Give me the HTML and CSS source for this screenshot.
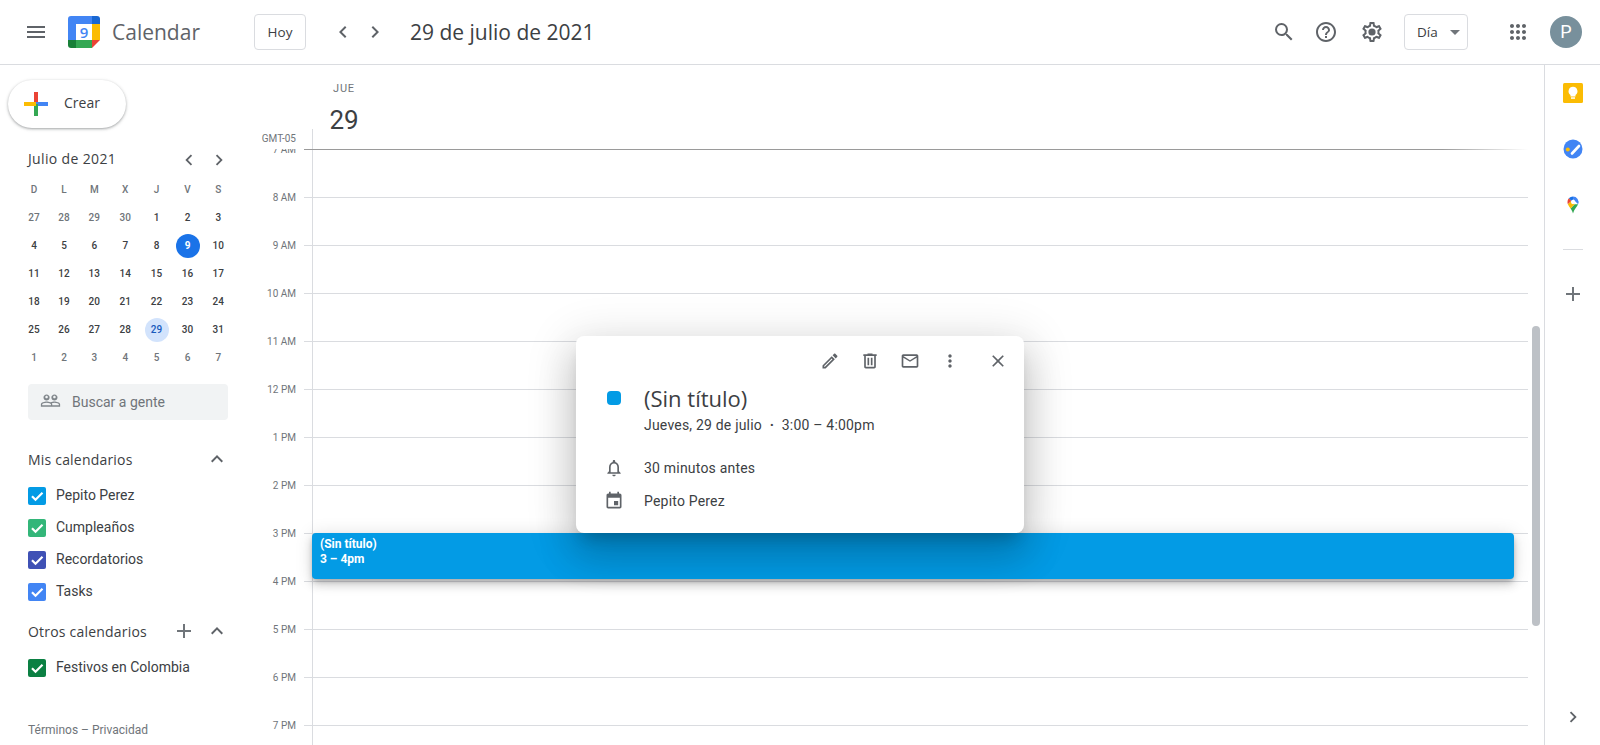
FILE: index.html
```html
<!DOCTYPE html>
<html lang="es">
<head>
    <meta charset="UTF-8" />
    <meta name="viewport" content="width=device-width, initial-scale=1.0" />
    <title>Google Calendar</title>
    <link rel="stylesheet" href="styles.css">
</head>
<body>
    <svg class="sprite" aria-hidden="true">
        <symbol id="i-menu" viewBox="0 0 24 24"><path d="M3 18h18v-2H3v2zm0-5h18v-2H3v2zm0-7v2h18V6H3z"/></symbol>
        <symbol id="i-left" viewBox="0 0 24 24"><path d="M15.41 16.59L10.83 12l4.58-4.59L14 6l-6 6 6 6 1.41-1.41z"/></symbol>
        <symbol id="i-right" viewBox="0 0 24 24"><path d="M8.59 16.59L13.17 12 8.59 7.41 10 6l6 6-6 6-1.41-1.41z"/></symbol>
        <symbol id="i-up" viewBox="0 0 24 24"><path d="M12 8l-6 6 1.41 1.41L12 10.83l4.59 4.58L18 14z"/></symbol>
        <symbol id="i-add" viewBox="0 0 24 24"><path d="M19 13h-6v6h-2v-6H5v-2h6V5h2v6h6v2z"/></symbol>
        <symbol id="i-search" viewBox="0 0 24 24"><path d="M15.5 14h-.79l-.28-.27A6.471 6.471 0 0 0 16 9.5 6.5 6.5 0 1 0 9.5 16c1.61 0 3.09-.59 4.23-1.57l.27.28v.79l5 4.99L20.49 19l-4.99-5zm-6 0C7.01 14 5 11.99 5 9.5S7.01 5 9.5 5 14 7.01 14 9.5 11.99 14 9.5 14z"/></symbol>
        <symbol id="i-help" viewBox="0 0 24 24"><path d="M11 18h2v-2h-2v2zm1-16C6.48 2 2 6.48 2 12s4.48 10 10 10 10-4.48 10-10S17.52 2 12 2zm0 18c-4.41 0-8-3.59-8-8s3.59-8 8-8 8 3.59 8 8-3.59 8-8 8zm0-14c-2.21 0-4 1.79-4 4h2c0-1.1.9-2 2-2s2 .9 2 2c0 2-3 1.75-3 5h2c0-2.25 3-2.5 3-5 0-2.21-1.79-4-4-4z"/></symbol>
        <symbol id="i-gear" viewBox="0 0 24 24"><path d="M19.43 12.98c.04-.32.07-.64.07-.98 0-.34-.03-.66-.07-.98l2.11-1.65c.19-.15.24-.42.12-.64l-2-3.46c-.09-.16-.26-.25-.44-.25-.06 0-.12.01-.17.03l-2.49 1c-.52-.4-1.08-.73-1.69-.98l-.38-2.65C14.46 2.18 14.25 2 14 2h-4c-.25 0-.46.18-.49.42l-.38 2.65c-.61.25-1.17.59-1.69.98l-2.49-1c-.06-.02-.12-.03-.18-.03-.17 0-.34.09-.43.25l-2 3.46c-.13.22-.07.49.12.64l2.11 1.65c-.04.32-.07.65-.07.98 0 .33.03.66.07.98l-2.11 1.65c-.19.15-.24.42-.12.64l2 3.46c.09.16.26.25.44.25.06 0 .12-.01.17-.03l2.49-1c.52.4 1.08.73 1.69.98l.38 2.65c.03.24.24.42.49.42h4c.25 0 .46-.18.49-.42l.38-2.65c.61-.25 1.17-.59 1.69-.98l2.49 1c.06.02.12.03.18.03.17 0 .34-.09.43-.25l2-3.46c.12-.22.07-.49-.12-.64l-2.11-1.65zm-1.98-1.71c.04.31.05.52.05.73 0 .21-.02.43-.05.73l-.14 1.13.89.7 1.08.84-.7 1.21-1.27-.51-1.04-.42-.9.68c-.43.32-.84.56-1.25.73l-1.06.43-.16 1.13-.2 1.35h-1.4l-.19-1.35-.16-1.13-1.06-.43c-.43-.18-.83-.41-1.23-.71l-.91-.7-1.06.43-1.27.51-.7-1.21 1.08-.84.89-.7-.14-1.13c-.03-.31-.05-.54-.05-.74s.02-.43.05-.73l.14-1.13-.89-.7-1.08-.84.7-1.21 1.27.51 1.04.42.9-.68c.43-.32.84-.56 1.25-.73l1.06-.43.16-1.13.2-1.35h1.39l.19 1.35.16 1.13 1.06.43c.43.18.83.41 1.23.71l.91.7 1.06-.43 1.27-.51.7 1.21-1.07.85-.89.7.14 1.13z"/><circle cx="12" cy="12" r="3.6"/></symbol>
        <symbol id="i-apps" viewBox="0 0 24 24"><path d="M6 8c1.1 0 2-.9 2-2s-.9-2-2-2-2 .9-2 2 .9 2 2 2zm6 12c1.1 0 2-.9 2-2s-.9-2-2-2-2 .9-2 2 .9 2 2 2zm-6 0c1.1 0 2-.9 2-2s-.9-2-2-2-2 .9-2 2 .9 2 2 2zm0-6c1.1 0 2-.9 2-2s-.9-2-2-2-2 .9-2 2 .9 2 2 2zm6 0c1.1 0 2-.9 2-2s-.9-2-2-2-2 .9-2 2 .9 2 2 2zm4-8c0 1.1.9 2 2 2s2-.9 2-2-.9-2-2-2-2 .9-2 2zm-4 2c1.1 0 2-.9 2-2s-.9-2-2-2-2 .9-2 2 .9 2 2 2zm6 6c1.1 0 2-.9 2-2s-.9-2-2-2-2 .9-2 2 .9 2 2 2zm0 6c1.1 0 2-.9 2-2s-.9-2-2-2-2 .9-2 2 .9 2 2 2z"/></symbol>
        <symbol id="i-people" viewBox="0 0 24 24"><path d="M16.5 13c-1.2 0-3.07.34-4.5 1-1.43-.67-3.3-1-4.5-1C5.33 13 1 14.08 1 16.25V19h22v-2.75c0-2.17-4.33-3.25-6.5-3.25zm-4 4.5h-10v-1.25c0-.54 2.56-1.75 5-1.75s5 1.21 5 1.75v1.25zm9 0H14v-1.25c0-.46-.2-.86-.52-1.22.88-.3 1.96-.53 3.02-.53 2.44 0 5 1.21 5 1.75v1.25zM7.5 12c1.93 0 3.5-1.57 3.5-3.5S9.43 5 7.5 5 4 6.57 4 8.5 5.57 12 7.5 12zm0-5.5c.83 0 1.5.67 1.5 1.5s-.67 1.5-1.5 1.5S6 8.83 6 8s.67-1.5 1.5-1.5zm9 5.5c1.93 0 3.5-1.57 3.5-3.5S18.43 5 16.5 5 13 6.57 13 8.5s1.57 3.5 3.5 3.5zm0-5.5c.83 0 1.5.67 1.5 1.5s-.67 1.5-1.5 1.5S15 8.83 15 8s.67-1.5 1.5-1.5z"/></symbol>
        <symbol id="i-edit" viewBox="0 0 24 24"><path d="M3 17.25V21h3.75L17.81 9.94l-3.75-3.75L3 17.25zM5.92 19H5v-.92l9.06-9.06.92.92L5.92 19zM20.71 5.63l-2.34-2.34c-.2-.2-.45-.29-.71-.29s-.51.1-.7.29l-1.83 1.83 3.75 3.75 1.83-1.83c.39-.39.39-1.02 0-1.41z"/></symbol>
        <symbol id="i-delete" viewBox="0 0 24 24"><path d="M15 4V3H9v1H4v2h1v13c0 1.1.9 2 2 2h10c1.1 0 2-.9 2-2V6h1V4h-5zm2 15H7V6h10v13z"/><path d="M9 8h2v9H9zm4 0h2v9h-2z"/></symbol>
        <symbol id="i-mail" viewBox="0 0 24 24"><path d="M20 4H4c-1.1 0-1.99.9-1.99 2L2 18c0 1.1.9 2 2 2h16c1.1 0 2-.9 2-2V6c0-1.1-.9-2-2-2zm0 14H4V8l8 5 8-5v10zm-8-7L4 6h16l-8 5z"/></symbol>
        <symbol id="i-more" viewBox="0 0 24 24"><path d="M12 8c1.1 0 2-.9 2-2s-.9-2-2-2-2 .9-2 2 .9 2 2 2zm0 2c-1.1 0-2 .9-2 2s.9 2 2 2 2-.9 2-2-.9-2-2-2zm0 6c-1.1 0-2 .9-2 2s.9 2 2 2 2-.9 2-2-.9-2-2-2z"/></symbol>
        <symbol id="i-close" viewBox="0 0 24 24"><path d="M19 6.41L17.59 5 12 10.59 6.41 5 5 6.41 10.59 12 5 17.59 6.41 19 12 13.41 17.59 19 19 17.59 13.41 12z"/></symbol>
        <symbol id="i-bell" viewBox="0 0 24 24"><path d="M12 22c1.1 0 2-.9 2-2h-4c0 1.1.9 2 2 2zm6-6v-5c0-3.07-1.63-5.64-4.5-6.32V4c0-.83-.67-1.5-1.5-1.5s-1.5.67-1.5 1.5v.68C7.64 5.36 6 7.92 6 11v5l-2 2v1h16v-1l-2-2zm-2 1H8v-6c0-2.48 1.51-4.5 4-4.5s4 2.02 4 4.5v6z"/></symbol>
        <symbol id="i-event" viewBox="0 0 24 24"><path d="M17 12h-5v5h5v-5zM16 1v2H8V1H6v2H5c-1.11 0-1.99.9-1.99 2L3 19c0 1.1.89 2 2 2h14c1.1 0 2-.9 2-2V5c0-1.1-.9-2-2-2h-1V1h-2zm3 18H5V8h14v11z"/></symbol>
        <symbol id="i-check" viewBox="0 0 18 18"><path d="M4 9.300l3.500 3.500 7-7" fill="none" stroke="#fff" stroke-width="2.200"/></symbol>
    </svg>

    <div class="app">
        <header class="topbar">
            <div class="brand">
                <svg class="icon menu-icon"><use href="#i-menu"/></svg>
                <svg class="logo" viewBox="0 0 32 32">
                    <path d="M24 0H3a3 3 0 0 0-3 3v21h8V8h16z" fill="#4285f4"/>
                    <path d="M24 0h5a3 3 0 0 1 3 3v5h-8z" fill="#1967d2"/>
                    <rect x="24" y="8" width="8" height="16" fill="#fbbc04"/>
                    <rect x="8" y="24" width="16" height="8" fill="#34a853"/>
                    <path d="M0 24h8v8H3a3 3 0 0 1-3-3z" fill="#188038"/>
                    <path d="M24 24h8l-8 8z" fill="#ea4335"/>
                    <text class="logo-day" x="16" y="21.500" text-anchor="middle">9</text>
                </svg>
                <span class="brand-name">Calendar</span>
            </div>
            <button class="outline-btn today-btn">Hoy</button>
            <div class="nav-arrows">
                <svg class="icon"><use href="#i-left"/></svg>
                <svg class="icon"><use href="#i-right"/></svg>
            </div>
            <h1 class="date-title">29 de julio de 2021</h1>
            <div class="tools">
                <svg class="icon"><use href="#i-search"/></svg>
                <svg class="icon help-icon"><use href="#i-help"/></svg>
                <svg class="icon gear-icon"><use href="#i-gear"/></svg>
                <button class="outline-btn view-btn">Día<span class="caret"></span></button>
                <svg class="icon apps-icon"><use href="#i-apps"/></svg>
                <div class="avatar">P</div>
            </div>
        </header>

        <div class="main">
            <aside class="sidebar">
                <button class="create-btn">
                    <svg class="create-plus" viewBox="0 0 24 24">
                        <rect x="10" y="0" width="4" height="12" fill="#ea4335"/>
                        <rect x="12" y="10" width="12" height="4" fill="#4285f4"/>
                        <rect x="10" y="12" width="4" height="12" fill="#34a853"/>
                        <rect x="0" y="10" width="12" height="4" fill="#fbbc04"/>
                    </svg>
                    Crear
                </button>

                <div class="mini-head">
                    <span class="mini-title">Julio de 2021</span>
                    <svg class="icon small"><use href="#i-left"/></svg>
                    <svg class="icon small"><use href="#i-right"/></svg>
                </div>
                <div class="mini-grid">
                    <span class="wd">D</span><span class="wd">L</span><span class="wd">M</span><span class="wd">X</span><span class="wd">J</span><span class="wd">V</span><span class="wd">S</span>
                    <span class="other">27</span><span class="other">28</span><span class="other">29</span><span class="other">30</span><span>1</span><span>2</span><span>3</span>
                    <span>4</span><span>5</span><span>6</span><span>7</span><span>8</span><span><b class="today">9</b></span><span>10</span>
                    <span>11</span><span>12</span><span>13</span><span>14</span><span>15</span><span>16</span><span>17</span>
                    <span>18</span><span>19</span><span>20</span><span>21</span><span>22</span><span>23</span><span>24</span>
                    <span>25</span><span>26</span><span>27</span><span>28</span><span><b class="picked">29</b></span><span>30</span><span>31</span>
                    <span class="other">1</span><span class="other">2</span><span class="other">3</span><span class="other">4</span><span class="other">5</span><span class="other">6</span><span class="other">7</span>
                </div>

                <div class="people-search">
                    <svg class="icon people-icon"><use href="#i-people"/></svg>
                    Buscar a gente
                </div>

                <div class="cal-head first">
                    <span class="cal-title">Mis calendarios</span>
                    <svg class="icon"><use href="#i-up"/></svg>
                </div>
                <ul class="cal-list">
                    <li><span class="check c-blue"><svg><use href="#i-check"/></svg></span>Pepito Perez</li>
                    <li><span class="check c-green"><svg><use href="#i-check"/></svg></span>Cumpleaños</li>
                    <li><span class="check c-indigo"><svg><use href="#i-check"/></svg></span>Recordatorios</li>
                    <li><span class="check c-tasks"><svg><use href="#i-check"/></svg></span>Tasks</li>
                </ul>

                <div class="cal-head">
                    <span class="cal-title">Otros calendarios</span>
                    <svg class="icon add-icon"><use href="#i-add"/></svg>
                    <svg class="icon"><use href="#i-up"/></svg>
                </div>
                <ul class="cal-list">
                    <li><span class="check c-forest"><svg><use href="#i-check"/></svg></span>Festivos en Colombia</li>
                </ul>

                <div class="terms">Términos – Privacidad</div>
            </aside>

            <section class="day-view">
                <div class="day-head">
                    <div class="gmt">GMT-05</div>
                    <div class="day-label">
                        <div class="day-name">JUE</div>
                        <div class="day-num">29</div>
                    </div>
                </div>
                <div class="hours">
                    <div class="scroll-edge"></div>
                    <div class="hour"><span class="hour-label">7 AM</span><i class="tick"></i><div class="cell"></div></div>
                    <div class="hour"><span class="hour-label">8 AM</span><i class="tick"></i><div class="cell"></div></div>
                    <div class="hour"><span class="hour-label">9 AM</span><i class="tick"></i><div class="cell"></div></div>
                    <div class="hour"><span class="hour-label">10 AM</span><i class="tick"></i><div class="cell"></div></div>
                    <div class="hour"><span class="hour-label">11 AM</span><i class="tick"></i><div class="cell"></div></div>
                    <div class="hour"><span class="hour-label">12 PM</span><i class="tick"></i><div class="cell"></div></div>
                    <div class="hour"><span class="hour-label">1 PM</span><i class="tick"></i><div class="cell"></div></div>
                    <div class="hour"><span class="hour-label">2 PM</span><i class="tick"></i><div class="cell"></div></div>
                    <div class="hour"><span class="hour-label">3 PM</span><i class="tick"></i><div class="cell"></div></div>
                    <div class="hour"><span class="hour-label">4 PM</span><i class="tick"></i><div class="cell"></div></div>
                    <div class="hour"><span class="hour-label">5 PM</span><i class="tick"></i><div class="cell"></div></div>
                    <div class="hour"><span class="hour-label">6 PM</span><i class="tick"></i><div class="cell"></div></div>
                    <div class="hour"><span class="hour-label">7 PM</span><i class="tick"></i><div class="cell"></div></div>
                    <div class="event">
                        <div>(Sin título)</div>
                        <div>3 – 4pm</div>
                    </div>
                    <div class="scroll-thumb"></div>
                </div>
            </section>

            <aside class="rail">
                <svg class="rail-app" viewBox="0 0 20 20">
                    <rect width="20" height="20" rx="1.500" fill="#fbbc04"/>
                    <path d="M10 3.800a4.500 4.500 0 0 0-2.500 8.200v1.400h5V12A4.500 4.500 0 0 0 10 3.800z" fill="#fff"/>
                    <rect x="8" y="14.300" width="4" height="1.500" fill="#fff"/>
                </svg>
                <svg class="rail-app" viewBox="0 0 20 20">
                    <circle cx="10" cy="10" r="9.500" fill="#4285f4"/>
                    <path d="M9 14.500l7-7.500" fill="none" stroke="#fff" stroke-width="2.600" stroke-linecap="round"/>
                    <circle cx="4.800" cy="10.500" r="2" fill="#fbbc04"/>
                </svg>
                <svg class="rail-app" viewBox="0 0 20 20">
                    <g transform="translate(1.500 1.500) scale(.85)">
                        <path d="M10 0a6.500 6.500 0 0 0-4.900 2.200l3 3L10 3.600z" fill="#1a73e8"/>
                        <path d="M5.100 2.200A6.500 6.500 0 0 0 3.500 6.500c0 1 .2 1.800.5 2.500l4.100-3.800z" fill="#ea4335"/>
                        <path d="M10 0a6.500 6.500 0 0 1 6 9l-4-4a2.600 2.600 0 0 0-2-1.400z" fill="#4285f4"/>
                        <path d="M16 9c-1.300 3-4.600 5.600-6 11-.6-2.400-1.800-4.200-2.900-5.800L12 9z" fill="#34a853"/>
                        <path d="M4 9l4.100-3.800L12 9l-4.900 5.200C5.900 12.500 4.800 11 4 9z" fill="#fbbc04"/>
                        <circle cx="10" cy="6.500" r="2.500" fill="#fff"/>
                    </g>
                </svg>
                <div class="rail-sep"></div>
                <svg class="icon add-icon-rail"><use href="#i-add"/></svg>
                <svg class="icon rail-toggle small"><use href="#i-right"/></svg>
            </aside>
        </div>

        <div class="popup">
            <div class="popup-tools">
                <svg class="icon pop-icon"><use href="#i-edit"/></svg>
                <svg class="icon pop-icon"><use href="#i-delete"/></svg>
                <svg class="icon pop-icon"><use href="#i-mail"/></svg>
                <svg class="icon pop-icon"><use href="#i-more"/></svg>
                <svg class="icon pop-icon pop-close"><use href="#i-close"/></svg>
            </div>
            <div class="popup-title"><span class="dot"></span>(Sin título)</div>
            <div class="popup-when">Jueves, 29 de julio <span class="sep">·</span> 3:00 – 4:00pm</div>
            <div class="popup-row first-row"><svg class="icon pop-icon"><use href="#i-bell"/></svg>30 minutos antes</div>
            <div class="popup-row"><svg class="icon pop-icon"><use href="#i-event"/></svg>Pepito Perez</div>
        </div>
    </div>
</body>
</html>
```

FILE: styles.css
```css
* {
    box-sizing: border-box;
    margin: 0;
    padding: 0;
}

body {
    font-family: "Roboto", sans-serif;
    color: #3c4043;
    background: #fff;
    overflow: hidden;
}

.sprite {
    display: none;
}

.app {
    position: relative;
    height: 100vh;
    display: flex;
    flex-direction: column;
}

.icon {
    width: 24px;
    height: 24px;
    flex: none;
    fill: #5f6368;
}

.icon.small {
    width: 22px;
    height: 22px;
}

/* top bar */

.topbar {
    height: 65px;
    flex: none;
    display: flex;
    align-items: center;
    border-bottom: 1px solid #dadce0;
}

.brand {
    width: 254px;
    padding-left: 24px;
    display: flex;
    align-items: center;
}

.logo {
    width: 32px;
    height: 32px;
    margin-left: 20px;
}

.logo-day {
    font-family: "Open Sans", sans-serif;
    font-size: 15px;
    font-weight: 600;
    fill: #4285f4;
}

.brand-name {
    font-family: "Open Sans", sans-serif;
    font-size: 21px;
    color: #5f6368;
    margin-left: 12px;
}

.outline-btn {
    height: 36px;
    background: #fff;
    border: 1px solid #dadce0;
    border-radius: 4px;
    font-family: "Open Sans", sans-serif;
    font-size: 13.5px;
    font-weight: 500;
    color: #3c4043;
}

.today-btn {
    width: 52px;
}

.nav-arrows {
    display: flex;
    gap: 8px;
    margin-left: 25px;
}

.date-title {
    font-family: "Open Sans", sans-serif;
    font-size: 21px;
    font-weight: 400;
    margin-left: 23px;
}

.tools {
    margin-left: auto;
    padding-right: 18px;
    display: flex;
    align-items: center;
    gap: 18px;
}

.help-icon {
    margin-right: 4px;
}

.view-btn {
    width: 64px;
    margin-left: 2px;
    padding-left: 12px;
    display: flex;
    align-items: center;
}

.caret {
    margin-left: 12px;
    border-top: 5px solid #70757a;
    border-left: 5px solid transparent;
    border-right: 5px solid transparent;
}

.apps-icon {
    margin-left: 20px;
}

.avatar {
    width: 32px;
    height: 32px;
    margin-left: 2px;
    border-radius: 50%;
    background: #78909c;
    color: #fff;
    font-size: 18px;
    line-height: 32px;
    text-align: center;
}

/* main columns */

.main {
    flex: 1;
    display: flex;
    min-height: 0;
}

.sidebar {
    width: 256px;
    flex: none;
    display: flex;
    flex-direction: column;
}

.create-btn {
    width: 118px;
    height: 48px;
    margin: 15px 0 0 8px;
    padding: 0 0 4px 16px;
    display: flex;
    align-items: center;
    gap: 16px;
    background: #fff;
    border: none;
    border-radius: 24px;
    box-shadow: 0 1px 2px 0 rgba(60, 64, 67, 0.3), 0 1px 3px 1px rgba(60, 64, 67, 0.15);
    font-family: "Open Sans", sans-serif;
    font-size: 14px;
    color: #3c4043;
}

.create-plus {
    width: 24px;
    height: 24px;
    margin-top: 4px;
}

.mini-head {
    margin: 20px 0 0 28px;
    width: 202px;
    height: 24px;
    display: flex;
    align-items: center;
    gap: 8px;
}

.mini-title {
    font-family: "Open Sans", sans-serif;
    font-size: 14px;
    letter-spacing: 0.35px;
    line-height: 22px;
    margin: 0 auto 2px 0;
}

.mini-grid {
    margin: 3px 0 0 19px;
    display: grid;
    grid-template-columns: 30px 30px 30.5px 31.5px 31px 31px 30.5px;
    grid-auto-rows: 28px;
    font-size: 10px;
    font-weight: 500;
}

.mini-grid span {
    display: flex;
    align-items: center;
    justify-content: center;
}

.mini-grid .wd,
.mini-grid .other {
    color: #70757a;
}

.today,
.picked {
    flex: none;
    width: 24px;
    height: 24px;
    margin-top: 2px;
    border-radius: 50%;
    font-weight: 500;
    line-height: 23px;
    text-align: center;
}

.today {
    background: #1a73e8;
    color: #fff;
    font-weight: 700;
}

.picked {
    background: #d2e3fc;
    color: #185abc;
}

.people-search {
    width: 200px;
    height: 36px;
    margin: 13px 0 0 28px;
    padding-left: 12px;
    display: flex;
    align-items: center;
    background: #f1f3f4;
    border-radius: 4px;
    font-size: 14px;
    color: #70757a;
}

.people-icon {
    width: 21px;
    height: 21px;
    margin: 0 11px 4px 0;
    fill: #80868b;
}

.cal-head {
    margin: 11px 0 0 28px;
    width: 201px;
    height: 24px;
    display: flex;
    align-items: center;
}

.cal-head.first {
    margin-top: 27px;
}

.cal-title {
    font-family: "Open Sans", sans-serif;
    font-size: 14px;
    font-weight: 500;
    letter-spacing: 0.2px;
    margin-right: auto;
}

.add-icon {
    margin-right: 9px;
    fill: #70757a;
}

.add-icon-rail {
    fill: #70757a;
}

.cal-list {
    list-style: none;
    margin: 9px 0 0 28px;
}

.cal-list li {
    height: 32px;
    padding-bottom: 2px;
    display: flex;
    align-items: center;
    font-size: 14px;
    gap: 10px;
}

.check {
    width: 18px;
    height: 18px;
    margin-top: 2px;
    border-radius: 2px;
}

.check svg {
    display: block;
    width: 18px;
    height: 18px;
}

.c-blue { background: #039be5; }
.c-green { background: #33b679; }
.c-indigo { background: #3f51b5; }
.c-tasks { background: #4285f4; }
.c-forest { background: #0b8043; }

.terms {
    margin: auto 0 7px 28px;
    font-size: 12px;
    line-height: 16px;
    color: #70757a;
}

/* day view */

.day-view {
    flex: 1;
    min-width: 0;
    display: flex;
    flex-direction: column;
}

.day-head {
    height: 84px;
    flex: none;
    display: flex;
}

.gmt {
    width: 57px;
    height: 20px;
    align-self: flex-end;
    padding-right: 16px;
    border-right: 1px solid #dadce0;
    font-size: 10px;
    line-height: 20px;
    text-align: right;
    color: #70757a;
}

.day-label {
    width: 62px;
    padding-top: 17px;
    text-align: center;
}

.day-name {
    font-size: 11px;
    line-height: 14px;
    letter-spacing: 0.8px;
    color: #70757a;
}

.day-num {
    margin-top: 9px;
    font-size: 26px;
    line-height: 30px;
}

.hours {
    position: relative;
    flex: 1;
    overflow: hidden;
}

.hour {
    height: 48px;
    display: flex;
}

.hour-label {
    width: 48px;
    height: 14px;
    margin-top: -6px;
    padding-right: 8px;
    font-size: 10px;
    line-height: 14px;
    text-align: right;
    color: #70757a;
}

.tick {
    width: 8px;
    height: 1px;
    background: #dadce0;
}

.cell {
    width: 1216px;
    border-top: 1px solid #dadce0;
    border-left: 1px solid #dadce0;
}

.scroll-edge + .hour .cell {
    border-top-color: transparent;
}

.scroll-edge {
    position: absolute;
    top: 0;
    left: 48px;
    width: 1224px;
    height: 1px;
    background: linear-gradient(to right, #9a9a9a 93%, rgba(154, 154, 154, 0));
}

.event {
    position: absolute;
    left: 56px;
    top: 384px;
    width: 1202px;
    height: 46px;
    padding: 4px 8px;
    background: #039be5;
    border-radius: 4px;
    box-shadow: 0 6px 10px 0 rgba(0, 0, 0, 0.14), 0 1px 18px 0 rgba(0, 0, 0, 0.12), 0 3px 5px -1px rgba(0, 0, 0, 0.2);
    color: #fff;
    font-size: 12px;
    font-weight: 700;
    line-height: 15px;
}

.scroll-thumb {
    position: absolute;
    left: 1276px;
    top: 177px;
    width: 8px;
    height: 300px;
    background: #bdc1c6;
    border-radius: 4px;
}

/* right rail */

.rail {
    width: 56px;
    flex: none;
    padding-top: 18px;
    display: flex;
    flex-direction: column;
    align-items: center;
    border-left: 1px solid #dadce0;
}

.rail-app {
    width: 20px;
    height: 20px;
    margin-bottom: 36px;
}

.rail-sep {
    width: 20px;
    height: 1px;
    margin: -2px 0 32px;
    background: #dadce0;
}

.rail-toggle {
    margin-top: auto;
    margin-bottom: 17px;
}

/* event popup */

.popup {
    position: absolute;
    left: 576px;
    top: 336px;
    width: 448px;
    height: 197px;
    background: #fff;
    border-radius: 8px;
    box-shadow: 0 24px 38px 3px rgba(0, 0, 0, 0.14), 0 9px 46px 8px rgba(0, 0, 0, 0.12), 0 11px 15px -7px rgba(0, 0, 0, 0.2);
}

.popup-tools {
    padding: 15px 16px 0 0;
    display: flex;
    justify-content: flex-end;
    gap: 20px;
}

.pop-icon {
    width: 20px;
    height: 20px;
}

.pop-close {
    margin-left: 8px;
}

.popup-title {
    margin-top: 13px;
    display: flex;
    align-items: center;
    font-family: "Open Sans", sans-serif;
    font-size: 22px;
    line-height: 28px;
}

.dot {
    width: 14px;
    height: 14px;
    margin: 0 23px 0 31px;
    border-radius: 4px;
    background: #039be5;
}

.popup-when {
    margin-top: 3px;
    padding-left: 68px;
    font-size: 14px;
    line-height: 20px;
    letter-spacing: 0.2px;
}

.sep {
    margin: 0 4px;
    font-weight: 700;
}

.popup-row {
    height: 33px;
    padding-left: 28px;
    display: flex;
    align-items: center;
    gap: 20px;
    font-size: 14px;
    letter-spacing: 0.2px;
}

.first-row {
    margin-top: 16px;
}
```
